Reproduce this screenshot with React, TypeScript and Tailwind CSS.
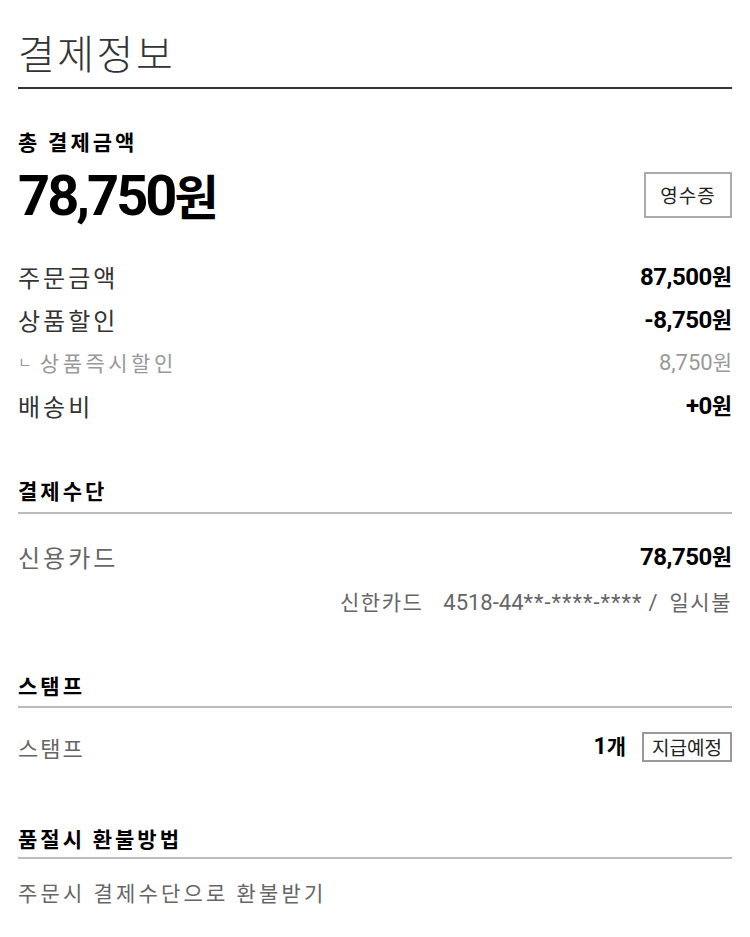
const KR = 'font-["Noto_Sans_CJK_KR","Noto_Sans",sans-serif]';
const NUM = 'font-["Roboto","Noto_Sans_CJK_KR",sans-serif]';

// 숫자는 Roboto, '원'은 한글 폰트로 따로
const Won = ({ amount, className, wonClass }: { amount: string; className: string; wonClass: string }) => (
  <span className="flex items-baseline">
    <span className={`${NUM} ${className}`}>{amount}</span>
    <span className={`${KR} ${wonClass}`}>원</span>
  </span>
);

const Row = ({ label, amount, sub }: { label: string; amount: string; sub?: boolean }) => (
  <div className="flex h-[43px] items-center justify-between">
    {sub ? (
      <span className="flex items-center text-[21px] tracking-[3.5px] text-[#999]">
        <span className="mr-[8px] text-[15px] tracking-normal">ㄴ</span>
        {label}
      </span>
    ) : (
      <span className="text-[24px] tracking-[3px] text-[#333]">{label}</span>
    )}
    {sub ? (
      <Won amount={amount} className="text-[22px] text-[#999]" wonClass="text-[21px] text-[#999]" />
    ) : (
      <Won
        amount={amount}
        className="text-[24px] font-bold tracking-[-0.5px] text-black"
        wonClass="text-[22px] font-bold text-black"
      />
    )}
  </div>
);

const SectionHead = ({ title, pb }: { title: string; pb: string }) => (
  <div className={`border-b-2 border-[#bbb] ${pb}`}>
    <h3 className="text-[21px] font-bold leading-[28px] tracking-[3px] text-black">{title}</h3>
  </div>
);

export default function App() {
  return (
    <div className={`${KR} min-h-[937px] bg-white px-[18px]`}>
      <div className="border-b-2 border-[#333] pt-[24px] pb-[7px]">
        <h2 className="text-[40px] font-light leading-[56px] tracking-[2.5px] text-[#333]">결제정보</h2>
      </div>

      <div className="mt-[38px] text-[21px] font-bold leading-[28px] tracking-[3px] text-black">총 결제금액</div>
      <div className="mt-[10px] flex h-[60px] items-center justify-between">
        <Won
          amount="78,750"
          className="text-[56px] font-bold leading-[60px] tracking-[-3px] text-black"
          wonClass="text-[48px] font-bold leading-[60px] text-black"
        />
        <button className="h-[46px] w-[88px] border-2 border-[#aaa] text-[19px] tracking-[1px] text-[#222]">
          영수증
        </button>
      </div>

      <div className="mt-[30px]">
        <Row label="주문금액" amount="87,500" />
        <Row label="상품할인" amount="-8,750" />
        <Row label="상품즉시할인" amount="8,750" sub />
        <Row label="배송비" amount="+0" />
      </div>

      <div className="mt-[49px]">
        <SectionHead title="결제수단" pb="pb-[8px]" />
        <div className="mt-[27px] flex h-[32px] items-center justify-between">
          <span className="text-[24px] tracking-[3px] text-[#666]">신용카드</span>
          <Won
            amount="78,750"
            className="text-[24px] font-bold tracking-[-0.5px] text-black"
            wonClass="text-[22px] font-bold text-black"
          />
        </div>
        <div className="mt-[14px] flex h-[30px] items-center justify-end text-[21px] text-[#666]">
          <span className="tracking-[1.5px]">신한카드</span>
          <span className={`${NUM} ml-[20px] text-[22px]`}>
            4518-44<span className="tracking-[1px]">**-****-****</span>
          </span>
          <span className={`${NUM} ml-[6px] text-[22px]`}>/</span>
          <span className="ml-[12px] tracking-[1.5px]">일시불</span>
        </div>
      </div>

      <div className="mt-[54px]">
        <SectionHead title="스탬프" pb="pb-[7px]" />
        <div className="mt-[23px] flex h-[32px] items-center justify-between">
          <span className="text-[22px] tracking-[2px] text-[#666]">스탬프</span>
          <div className="flex items-center">
            <span className="flex items-baseline font-bold text-black">
              <span className={`${NUM} text-[23px]`}>1</span>
              <span className="text-[21px]">개</span>
            </span>
            <span className="ml-[16px] flex h-[30px] w-[90px] items-center justify-center border-2 border-[#999] text-[19px] text-[#222]">
              지급예정
            </span>
          </div>
        </div>
      </div>

      <div className="mt-[61px]">
        <SectionHead title="품절시 환불방법" pb="pb-[5px]" />
        <div className="mt-[19px] flex h-[30px] items-center text-[21px] tracking-[3.2px] text-[#666]">
          주문시 결제수단으로 환불받기
        </div>
      </div>
    </div>
  );
}
